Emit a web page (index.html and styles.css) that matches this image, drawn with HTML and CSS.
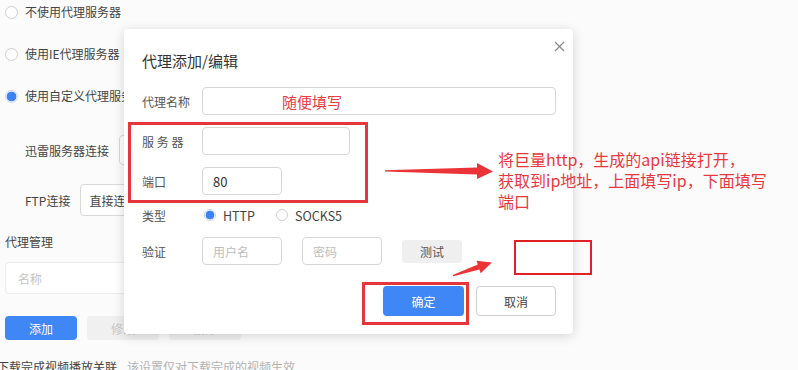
FILE: index.html
```html
<!DOCTYPE html>
<html lang="zh-CN">
<head>
<meta charset="utf-8">
<title>代理设置</title>
<link rel="stylesheet" href="styles.css">
</head>
<body>
<div class="page">
  <div class="opts">
    <div class="opt"><span class="radio"></span><span>不使用代理服务器</span></div>
    <div class="opt"><span class="radio"></span><span>使用IE代理服务器</span></div>
    <div class="opt"><span class="radio on"></span><span>使用自定义代理服务器</span></div>
  </div>
  <div class="sub sub-xl">
    <span class="sub-label">迅雷服务器连接</span>
    <div class="box box-xl"></div>
  </div>
  <div class="sub sub-ftp">
    <span class="sub-label">FTP连接</span>
    <div class="box box-ftp">直接连接</div>
  </div>
  <div class="section-title">代理管理</div>
  <div class="name-input">名称</div>
  <div class="btns">
    <div class="btn btn-blue">添加</div>
    <div class="btn btn-gray">修改</div>
    <div class="btn btn-gray">删除</div>
  </div>
  <div class="foot"><span class="foot-main">下载完成视频播放关联</span><span class="foot-tip">该设置仅对下载完成的视频生效</span></div>
</div>

<div class="dialog">
  <svg class="close" width="11" height="11" viewBox="0 0 11 11"><path d="M1 1L10 10M10 1L1 10" stroke="#8a8a8a" stroke-width="1.2" fill="none"/></svg>
  <div class="d-title">代理添加/编辑</div>
  <div class="d-row r-name">
    <span class="d-label">代理名称</span>
    <div class="d-input w-full"><span class="hint">随便填写</span></div>
  </div>
  <div class="d-row r-server">
    <span class="d-label">服 务 器</span>
    <div class="d-input w-server"></div>
  </div>
  <div class="d-row r-port">
    <span class="d-label">端口</span>
    <div class="d-input w-port"><span class="val">80</span></div>
  </div>
  <div class="d-row r-type">
    <span class="d-label">类型</span>
    <span class="radio sm on"></span><span class="rlabel">HTTP</span>
    <span class="radio sm second"></span><span class="rlabel">SOCKS5</span>
  </div>
  <div class="d-row r-auth">
    <span class="d-label">验证</span>
    <div class="d-input w-port ph">用户名</div>
    <div class="d-input w-port ph">密码</div>
    <div class="test-btn">测试</div>
  </div>
  <div class="d-foot">
    <div class="ok">确定</div>
    <div class="cancel">取消</div>
  </div>
</div>

<div class="notes">
  <div class="mark mark-fields"></div>
  <div class="mark mark-empty"></div>
  <div class="mark mark-ok"></div>
  <svg class="arrows" width="798" height="370" viewBox="0 0 798 370">
    <polygon points="385,170.2 477,167.6 477,163 493,171.6 477,179 477,174.6 385,171.6" fill="#ea3438"/>
    <g transform="translate(453,275.5) rotate(-18.4)">
      <polygon points="0,-0.6 27,-2.6 27,-6.5 41,0 27,6.5 27,2.6 0,0.9" fill="#ea3438"/>
    </g>
  </svg>
  <div class="note-text">将巨量http，生成的api链接打开，<br>获取到ip地址，上面填写ip，下面填写<br>端口</div>
</div>
</body>
</html>
```

FILE: styles.css
```css
* { box-sizing: border-box; }
html, body { margin: 0; padding: 0; }
body {
  width: 798px;
  height: 370px;
  overflow: hidden;
  position: relative;
  background: #fbfbfb;
  font-family: "Noto Sans CJK SC", "Noto Sans", sans-serif;
  font-size: 12px;
  color: #444;
}

.page { padding-left: 5px; }

.opts { display: flex; flex-direction: column; gap: 18px; }
.opt { display: flex; align-items: center; height: 24px; gap: 7px; color: #444; line-height: 1; }

.radio {
  display: inline-block;
  width: 13px; height: 13px;
  border-radius: 50%;
  border: 1px solid #cfcfcf;
  background: #fff;
  flex: none;
}
.radio.on {
  border-color: #c3d7f8;
  background: radial-gradient(circle, #3d83f4 0 4.6px, #fff 5.2px);
}
.radio.sm { width: 12px; height: 12px; }
.radio.sm.on { background: radial-gradient(circle, #3d83f4 0 4.1px, #fff 4.7px); }

.sub { display: flex; align-items: center; padding-left: 20px; gap: 10px; }
.sub-xl { margin-top: 27px; height: 30px; }
.sub-ftp { margin-top: 19px; height: 32px; }
.sub-label { color: #444; }
.box {
  height: 100%;
  border: 1px solid #d8d8d8;
  border-radius: 4px;
  background: #fff;
  width: 200px;
  display: flex; align-items: center;
  padding-left: 8px;
  color: #444;
}
.box-ftp { width: 200px; }

.section-title { margin-top: 17px; height: 18px; line-height: 18px; color: #444; }

.name-input {
  margin-top: 11px;
  width: 350px; height: 32px;
  border: 1px solid #ececec;
  border-radius: 4px;
  background: #fff;
  padding-left: 12px;
  display: flex; align-items: center;
  color: #c4c4c4;
}

.btns { margin-top: 22px; display: flex; gap: 10px; }
.btn {
  width: 72px; height: 24px;
  border-radius: 4px;
  display: flex; align-items: center; justify-content: center;
}
.btn-blue { background: #3f86f7; color: #fff; }
.btn-gray { background: #f0f0f0; color: #c9c9c9; }

.foot { margin-top: 18px; margin-left: -8px; display: flex; gap: 10px; height: 18px; line-height: 18px; }
.foot-main { color: #444; }
.foot-tip { color: #b3b3b3; }

/* dialog overlay */
.dialog {
  position: absolute;
  left: 124px; top: 29px;
  width: 449px; height: 305px;
  background: #fff;
  border-radius: 4px;
  box-shadow: 0 2px 12px rgba(0,0,0,0.16);
  padding: 21px 17px 0 18px;
}
.close { position: absolute; left: 430px; top: 12px; }
.d-title { font-size: 15px; line-height: 22px; color: #333; }
.d-row { display: flex; align-items: center; }
.d-label { width: 60px; flex: none; color: #555; white-space: pre; }
.d-input {
  border: 1px solid #d6d6d6;
  border-radius: 4px;
  background: #fff;
  height: 28px;
  display: flex; align-items: center;
}
.w-full { width: 354px; padding-left: 79px; }
.w-server { width: 148px; }
.w-port { width: 80px; padding-left: 10px; }
.r-name { margin-top: 15px; }
.r-server { margin-top: 12px; }
.r-port { margin-top: 12px; }
.r-type { margin-top: 10px; height: 20px; }
.r-auth { margin-top: 12px; }
.hint { color: #ea3b3e; font-size: 15px; }
.val { color: #333; font-size: 13px; }
.ph { color: #bdbdbd; }
.r-auth .ph + .ph { margin-left: 20px; }
.r-type .radio.sm { margin-left: 2px; }
.r-type .radio.second { margin-left: 21px; }
.rlabel { margin-left: 7px; color: #444; font-size: 12.5px; }
.test-btn {
  margin-left: 20px;
  width: 60px; height: 23px;
  border-radius: 3px;
  background: #efefef;
  color: #555;
  display: flex; align-items: center; justify-content: center;
}
.d-foot { margin-top: 21px; display: flex; justify-content: flex-end; gap: 12px; }
.ok, .cancel {
  height: 30px;
  border-radius: 4px;
  display: flex; align-items: center; justify-content: center;
}
.ok { width: 81px; background: #3f86f7; color: #fff; }
.cancel { width: 80px; border: 1px solid #cfcfcf; background: #fff; color: #444; }

/* annotations overlay */
.notes { position: absolute; left: 0; top: 0; width: 798px; height: 370px; pointer-events: none; }
.arrows { position: absolute; left: 0; top: 0; }
.mark { position: absolute; border: 3px solid #e4363b; }
.mark-fields { left: 128px; top: 122px; width: 240px; height: 81px; }
.mark-empty { left: 514px; top: 240px; width: 78px; height: 35px; border-width: 2px; border-color: #e02025; }
.mark-ok { left: 362px; top: 282px; width: 107px; height: 43px; }
.note-text {
  position: absolute;
  left: 498px; top: 149px;
  white-space: nowrap;
  font-size: 16px;
  line-height: 21px;
  color: #e9383d;
}
```
